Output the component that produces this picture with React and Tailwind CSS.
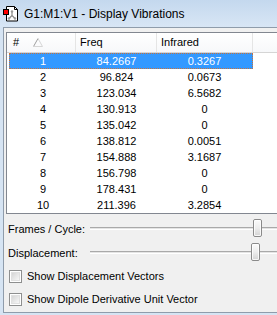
import React from "react";

const rows = [
  ["1", "84.2667", "0.3267"],
  ["2", "96.824", "0.0673"],
  ["3", "123.034", "6.5682"],
  ["4", "130.913", "0"],
  ["5", "135.042", "0"],
  ["6", "138.812", "0.0051"],
  ["7", "154.888", "3.1687"],
  ["8", "156.798", "0"],
  ["9", "178.431", "0"],
  ["10", "211.396", "3.2854"],
];

const AppIcon = () => (
  <svg width="16" height="17" viewBox="0 0 16 17" className="shrink-0">
    <path d="M3.5 1.5h8l3 3v11.5h-11z" fill="#fff" stroke="#000" />
    <path d="M11.5 1.5v3h3" fill="none" stroke="#000" />
    <path d="M9 6.5v4M9 10.5l-3 3M9 10.5l3 3" stroke="#8a8a8a" strokeWidth="1.2" fill="none" />
    <circle cx="9" cy="6.5" r="1.2" fill="#9a9a9a" />
    <circle cx="6" cy="13.5" r="1.2" fill="#9a9a9a" />
    <circle cx="12" cy="13.5" r="1.2" fill="#9a9a9a" />
    <rect x="0.5" y="4.5" width="5" height="5" fill="#f00" stroke="#000" />
  </svg>
);

const SortArrow = () => (
  <svg width="10" height="9" viewBox="0 0 10 9" className="shrink-0">
    <path d="M0.5 8.5L5 0.5" stroke="#9e9e9e" fill="none" />
    <path d="M5 0.5L9.5 8.5H0.5" stroke="#d6d6d6" fill="none" />
  </svg>
);

const Slider = ({ label, thumb }) => (
  <div className="h-[24px] flex items-center">
    <div className="w-[86px] shrink-0 pl-[4px]">{label}</div>
    <div className="relative flex-1 h-full">
      <div className="absolute left-0 right-0 top-[10px] h-[3px] border-t border-[#a9a9a9] border-b border-b-white bg-[#e4e4e4]" />
      <div
        className={`absolute top-[2px] w-[9px] h-[18px] rounded-[2px] border border-[#8a8a8a] bg-gradient-to-b from-[#fbfbfb] via-[#ededed] to-[#d3d3d3] ${thumb}`}
      >
        <div className="h-full w-full rounded-[1px] border border-white/80" />
      </div>
    </div>
  </div>
);

const Check = ({ label }) => (
  <div className="h-[23px] flex items-center pl-[5px] gap-[5px]">
    <div className="w-[13px] h-[13px] shrink-0 border border-[#8e8f8f] bg-white p-[1px]">
      <div className="w-full h-full bg-gradient-to-br from-[#d6d6d6] to-[#f7f7f7] border border-[#e0e0e0]" />
    </div>
    <span>{label}</span>
  </div>
);

export default function App() {
  return (
    <div className="w-[277px] h-[315px] overflow-hidden flex flex-col bg-[#d6e4f3] text-[11px] leading-none text-black font-['Liberation_Sans',Arial,sans-serif]">
      <div className="h-[27px] shrink-0 flex items-center pl-[3px] gap-[5px] bg-gradient-to-b from-[#c4d8ee] to-[#d8e6f5]">
        <AppIcon />
        <span className="text-[12px]">G1:M1:V1 - Display Vibrations</span>
      </div>

      <div className="flex-1 flex pl-[3px] pb-[2px] min-h-0">
        <div className="flex-1 flex flex-col overflow-hidden bg-[#f0f0f0] border-l border-t border-b border-[#8f9cab]">
          <div className="ml-[2px] mt-[4px] w-[290px] shrink-0 border border-[#828790] bg-white">
            <div className="h-[20px] flex border-b border-[#d5d5d5] bg-gradient-to-b from-white to-[#f7f8fa]">
              <div className="w-[69px] shrink-0 border-r border-[#e5e5e5] flex items-center pl-[6px]">
                <span>#</span>
                <span className="ml-[14px]">
                  <SortArrow />
                </span>
              </div>
              <div className="w-[81px] shrink-0 border-r border-[#e5e5e5] flex items-center pl-[4px]">Freq</div>
              <div className="w-[96px] shrink-0 border-r border-[#e5e5e5] flex items-center pl-[4px]">Infrared</div>
              <div className="flex-1" />
            </div>
            <div className="pl-[2px]">
              {rows.map((r, i) => (
                <div
                  key={r[0]}
                  className={
                    i === 0
                      ? "w-[244px] h-[16px] flex bg-[#3399ff] text-white border border-dotted border-[#c8723a]"
                      : "w-[244px] h-[16px] flex border border-transparent"
                  }
                >
                  <div className="w-[66px] shrink-0 flex items-center justify-center">{r[0]}</div>
                  <div className="w-[81px] shrink-0 flex items-center justify-center">{r[1]}</div>
                  <div className="w-[95px] shrink-0 flex items-center justify-center">{r[2]}</div>
                </div>
              ))}
            </div>
          </div>

          <div className="mt-[3px]">
            <Slider label="Frames / Cycle:" thumb="left-[163px]" />
            <Slider label="Displacement:" thumb="left-[161px]" />
          </div>
          <Check label="Show Displacement Vectors" />
          <Check label="Show Dipole Derivative Unit Vector" />
        </div>
      </div>
    </div>
  );
}
